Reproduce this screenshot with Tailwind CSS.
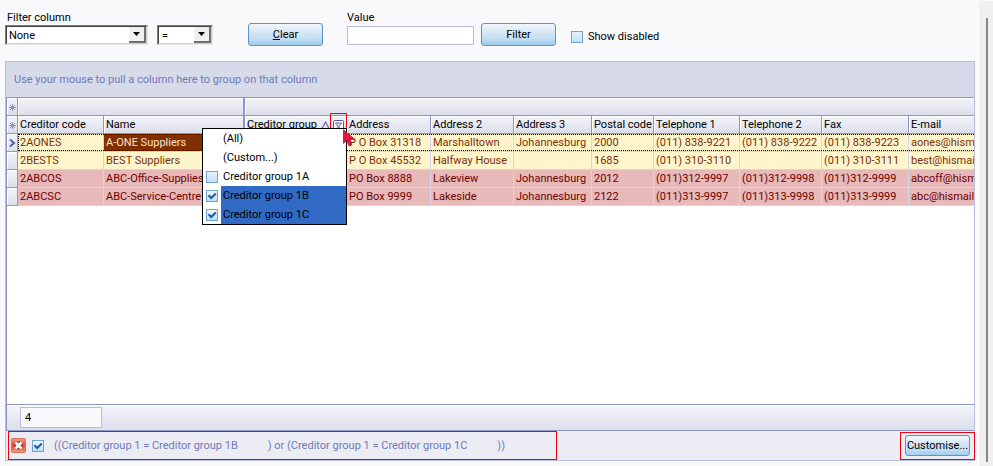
<!DOCTYPE html>
<html lang="en">
<head>
<meta charset="utf-8">
<title>Creditors</title>
<script src="https://cdn.jsdelivr.net/npm/@tailwindcss/browser@4"></script>
</head>
<body class="flex h-screen overflow-hidden bg-[#f9f9fc] font-['Roboto','Liberation_Sans',sans-serif] text-[11px] leading-4 text-black">
<svg class="hidden">
  <symbol id="star" viewBox="0 0 7 7"><path d="M3.5 0v7M0 3.5h7M1 1l5 5M6 1L1 6" stroke="#8a92bd" stroke-width="1" fill="none"/></symbol>
  <symbol id="drop" viewBox="0 0 7 4"><path d="M0 0h7L3.5 4z" fill="#000"/></symbol>
</svg>

<main class="flex min-w-0 flex-1 flex-col border-r border-white pb-[5px] pl-[5px] pr-[3px]">
  <form class="flex h-[61px] shrink-0 items-start pt-[10px]">
    <div class="flex w-[143px] flex-col">
      <label for="column" class="h-[15px] pl-[2px]">Filter column</label>
      <div class="relative h-5 border border-t-[#808080] border-l-[#808080] border-r-[#e4e4e4] border-b-[#e4e4e4]">
        <select id="column" class="block h-[18px] w-full appearance-none border border-[#404040] border-r-[#d4d0c8] border-b-[#d4d0c8] bg-white pt-px pl-[2px] leading-4 outline-none"><option>None</option></select>
        <span class="pointer-events-none absolute top-px right-px flex h-4 w-[17px] items-center justify-center border-r-2 border-b-2 border-r-[#707070] border-b-[#707070] bg-[#f0f0f0]"><svg class="h-1 w-[7px]"><use href="#drop"/></svg></span>
      </div>
    </div>
    <div class="relative mt-[15px] ml-[9px] h-5 w-14 border border-t-[#808080] border-l-[#808080] border-r-[#e4e4e4] border-b-[#e4e4e4]">
      <select aria-label="Operator" class="block h-[18px] w-full appearance-none border border-[#404040] border-r-[#d4d0c8] border-b-[#d4d0c8] bg-white pt-px pl-[3px] leading-4 outline-none"><option>=</option></select>
      <span class="pointer-events-none absolute top-px right-px flex h-4 w-[17px] items-center justify-center border-r-2 border-b-2 border-r-[#707070] border-b-[#707070] bg-[#f0f0f0]"><svg class="h-1 w-[7px]"><use href="#drop"/></svg></span>
    </div>
    <button type="button" class="mt-[13px] ml-[35px] h-[23px] w-[75px] rounded-[3px] border border-[#5d93c8] bg-linear-to-b from-[#f1f7fd] via-[#d3e5f4] via-45% to-[#c5e3f7] shadow-[inset_0_-9px_6px_-5px_#9ccaeb]"><u>C</u>lear</button>
    <div class="ml-6 flex w-[127px] flex-col">
      <label for="value" class="h-4">Value</label>
      <input id="value" type="text" class="h-[19px] border border-[#b9bddd] bg-white px-[2px] outline-none">
    </div>
    <button type="button" class="mt-[13px] ml-[7px] h-[23px] w-[75px] rounded-[3px] border border-[#5d93c8] bg-linear-to-b from-[#f1f7fd] via-[#d3e5f4] via-45% to-[#c5e3f7] shadow-[inset_0_-9px_6px_-5px_#9ccaeb]">Filter</button>
    <label class="mt-[18px] ml-[15px] flex items-center gap-[5px]"><input type="checkbox" class="size-3 appearance-none border border-[#6ea3d3] bg-linear-to-b from-[#e3f1fb] to-[#c3e4f8]"><span class="pt-px">Show disabled</span></label>
  </form>

  <section class="relative flex min-h-0 flex-1 flex-col border border-[#b9bddd] bg-white">
    <p class="flex h-9 shrink-0 items-center border-b border-[#8f98c0] bg-[#d7dae8] px-2 pt-px text-[#6f7bb8]">Use your mouse to pull a column here to group on that column</p>

    <div class="min-h-0 flex-1 overflow-hidden border-l border-[#8f98c4]">
      <table class="w-full table-fixed border-separate border-spacing-0 whitespace-nowrap text-left [&_td]:overflow-hidden [&_td]:border-r [&_td]:border-b [&_td]:border-[#d5d5ea] [&_td]:p-0 [&_td]:pt-px [&_td]:pl-[2px] [&_th]:h-[18px] [&_th]:overflow-hidden [&_th]:border-r [&_th]:border-b [&_th]:border-[#8f98c4] [&_th]:bg-linear-to-b [&_th]:from-[#f4f5f9] [&_th]:to-[#dcdeeb] [&_th]:p-0 [&_th]:pt-px [&_th]:pl-[2px] [&_th]:font-normal [&_th]:shadow-[inset_1px_1px_#fff] [&_tr]:h-[18px]">
        <colgroup>
          <col class="w-[11px]"><col class="w-[86px]"><col class="w-[141px]"><col class="w-[102px]"><col class="w-[84px]"><col class="w-[83px]"><col class="w-[78px]"><col class="w-[62px]"><col class="w-[86px]"><col class="w-[82px]"><col class="w-[87px]"><col>
        </colgroup>
        <thead>
          <tr><th><svg class="size-[7px]"><use href="#star"/></svg></th><th colspan="2" class="border-r-2!"></th><th colspan="9" class="border-r-0!"></th></tr>
          <tr><th><svg class="size-[7px]"><use href="#star"/></svg></th><th>Creditor code</th><th class="border-r-2!">Name</th>
            <th><div class="flex items-center"><span class="flex-1">Creditor group</span>
              <svg class="mr-[3px] h-2 w-[9px]" viewBox="0 0 9 8"><path d="M4.5 1L8 7.5H1z" fill="none" stroke="#5d6bb4" stroke-width="1.2"/></svg>
              <button type="button" aria-label="Filter creditor group" class="mr-[2px] block"><svg class="size-[11px]" viewBox="0 0 11 11"><rect x=".5" y=".5" width="10" height="10" rx="1" fill="#fff" stroke="#4d5a9c"/><path d="M2.5 3h6L6.2 5.7V8.5H4.8V5.7z" fill="#fff" stroke="#4d5a9c"/></svg></button></div></th>
            <th>Address</th><th>Address 2</th><th>Address 3</th><th>Postal code</th><th>Telephone 1</th><th>Telephone 2</th><th>Fax</th><th class="border-r-0!">E-mail</th></tr>
        </thead>
        <tbody>
          <tr class="relative bg-[#fff5cd] text-[#803000]">
            <th><svg class="h-2 w-[7px]" viewBox="0 0 7 8"><path d="M1 .5L5 4 1 7.5" fill="none" stroke="#5663a6" stroke-width="2"/></svg><span class="pointer-events-none absolute top-0 right-0 bottom-px left-[11px] border border-r-0 border-dotted border-black"></span></th><td>2AONES</td><td class="bg-[#803000] text-[#ffe3c8]">A-ONE Suppliers</td><td></td><td>P O Box 31318</td><td>Marshalltown</td><td>Johannesburg</td><td>2000</td><td>(011) 838-9221</td><td>(011) 838-9222</td><td>(011) 838-9223</td><td class="border-r-0!">aones@hismail</td></tr>
          <tr class="bg-[#fff5cd] text-[#803000]"><th></th><td>2BESTS</td><td>BEST Suppliers</td><td></td><td>P O Box 45532</td><td>Halfway House</td><td></td><td>1685</td><td>(011) 310-3110</td><td></td><td>(011) 310-3111</td><td class="border-r-0!">best@hismail</td></tr>
          <tr class="bg-[#e8b9b9] text-[#700000]"><th></th><td>2ABCOS</td><td>ABC-Office-Supplies</td><td></td><td>PO Box 8888</td><td>Lakeview</td><td>Johannesburg</td><td>2012</td><td>(011)312-9997</td><td>(011)312-9998</td><td>(011)312-9999</td><td class="border-r-0!">abcoff@hismail</td></tr>
          <tr class="bg-[#e8b9b9] text-[#700000]"><th></th><td>2ABCSC</td><td>ABC-Service-Centre</td><td></td><td>PO Box 9999</td><td>Lakeside</td><td>Johannesburg</td><td>2122</td><td>(011)313-9997</td><td>(011)313-9998</td><td>(011)313-9999</td><td class="border-r-0!">abc@hismail.</td></tr>
        </tbody>
      </table>
    </div>

    <div class="h-[27px] shrink-0 border-y border-l border-[#8f98c4] bg-linear-to-b from-[#f4f5f9] to-[#dcdeeb] pt-[2px] pl-[13px] shadow-[inset_0_1px_#fff]">
      <div class="h-[21px] w-[82px] border border-[#b9bddd] bg-[#f9f9fc] px-1 leading-[19px]">4</div>
    </div>
    <footer class="flex h-[29px] shrink-0 items-stretch justify-between bg-[#ececf5] pl-[2px]">
      <div class="flex w-[549px] items-center border border-[#f00010] pl-[2px] text-[#6f7bb8]">
        <button type="button" aria-label="Clear filter"><svg class="size-[15px]" viewBox="0 0 15 15"><defs><linearGradient id="redfill" x2="0" y2="1"><stop stop-color="#f2a08c"/><stop offset=".5" stop-color="#dc4a32"/><stop offset="1" stop-color="#f6a184"/></linearGradient></defs><rect x=".5" y=".5" width="14" height="14" rx="1.5" fill="url(#redfill)" stroke="#d9705c"/><path d="M4.5 4.5l6 6m0-6l-6 6" stroke="#9c2d20" stroke-width="4.5"/><path d="M4.5 4.5l6 6m0-6l-6 6" stroke="#fff" stroke-width="2.6"/></svg></button>
        <label class="ml-[6px] flex items-center whitespace-pre"><span class="relative mr-[10px] block size-3"><input type="checkbox" checked class="block size-3 appearance-none border border-[#6ea3d3] bg-linear-to-b from-[#eef7fd] to-[#b9e0f7]"><svg class="pointer-events-none absolute inset-0 size-3" viewBox="0 0 12 12"><path d="M2.5 5.2l2.7 2.8 4.6-4.5" fill="none" stroke="#1f5c9e" stroke-width="2"/></svg></span><span class="pt-px">((Creditor group 1 = Creditor group 1B           ) or (Creditor group 1 = Creditor group 1C           ))</span></label>
      </div>
      <div class="mt-px -mr-px border border-[#f00010] px-1 pt-[2px]">
        <button type="button" class="block h-[21px] w-[65px] rounded-[3px] border border-[#5d93c8] bg-linear-to-b from-[#f1f7fd] via-[#d3e5f4] via-45% to-[#c5e3f7] shadow-[inset_0_-8px_6px_-5px_#9ccaeb]">Customise...</button>
      </div>
    </footer>

    <div class="pointer-events-none absolute top-[51px] left-[324px] size-[17px] border border-[#f00010]"></div>
    <div class="absolute top-[66px] left-[196px] w-[145px] border border-black bg-white [&_label]:flex [&_label]:h-[19px] [&_label]:items-center [&_label]:pl-[3px] [&_span]:flex [&_span]:h-[19px] [&_span]:flex-1 [&_span]:items-center [&_span]:pt-px [&_span]:pl-[2px]">
      <button type="button" class="block h-[19px] w-full pt-px pl-5 text-left">(All)</button>
      <button type="button" class="block h-[19px] w-full pt-px pl-5 text-left">(Custom...)</button>
      <label><input type="checkbox" class="mr-[3px] size-3 appearance-none border border-[#6ea3d3] bg-linear-to-b from-[#e3f1fb] to-[#c3e4f8]"><span>Creditor group 1A</span></label>
      <label class="relative"><input type="checkbox" checked class="mr-[3px] size-3 appearance-none border border-[#6ea3d3] bg-linear-to-b from-[#eef7fd] to-[#b9e0f7]"><svg class="pointer-events-none absolute left-[3px] size-3" viewBox="0 0 12 12"><path d="M2.5 5.2l2.7 2.8 4.6-4.5" fill="none" stroke="#1f5c9e" stroke-width="2"/></svg><span class="bg-[#316ac5]">Creditor group 1B</span></label>
      <label class="relative"><input type="checkbox" checked class="mr-[3px] size-3 appearance-none border border-[#6ea3d3] bg-linear-to-b from-[#eef7fd] to-[#b9e0f7]"><svg class="pointer-events-none absolute left-[3px] size-3" viewBox="0 0 12 12"><path d="M2.5 5.2l2.7 2.8 4.6-4.5" fill="none" stroke="#1f5c9e" stroke-width="2"/></svg><span class="bg-[#316ac5]">Creditor group 1C</span></label>
    </div>
    <svg class="pointer-events-none absolute top-[67px] left-[337px] h-[18px] w-[13px]" viewBox="0 0 13 18"><path d="M.5 .8v13.5l3.2-3 2.4 5.6 2.8-1.2-2.4-5.4h5z" fill="#f0143c" stroke="#8c2040" stroke-width=".8"/></svg>
  </section>
</main>

<div class="mt-px w-[14px] shrink-0 bg-[#f0f0f0] pt-[17px] pb-1"><div class="ml-[7px] h-full w-[2px] bg-[#868686]"></div></div>
</body>
</html>
